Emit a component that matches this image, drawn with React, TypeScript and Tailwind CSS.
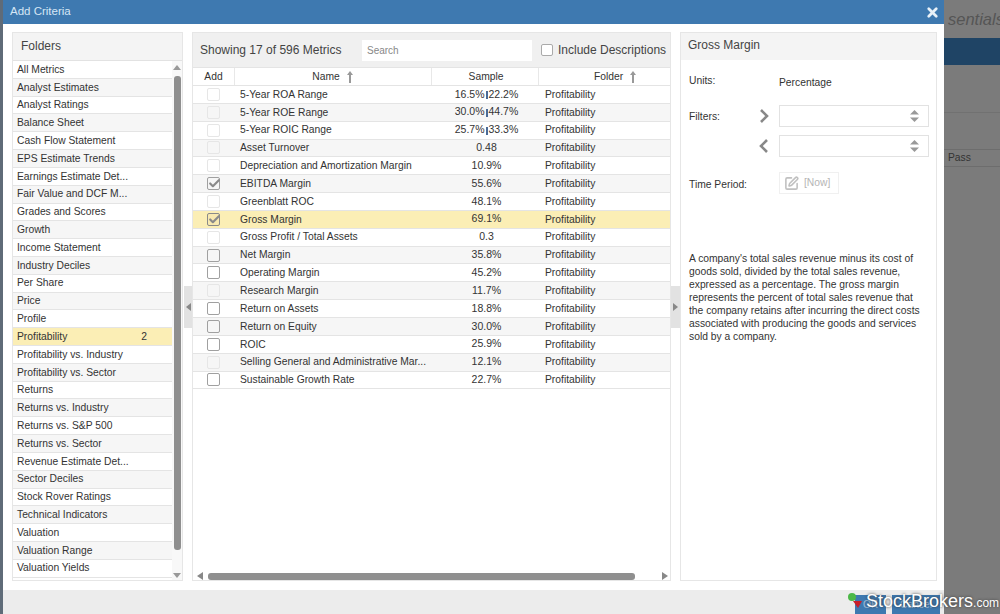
import { X, Check, SquarePen } from 'lucide-react';

const folders = [
    'All Metrics', 'Analyst Estimates', 'Analyst Ratings', 'Balance Sheet', 'Cash Flow Statement',
    'EPS Estimate Trends', 'Earnings Estimate Det...', 'Fair Value and DCF M...', 'Grades and Scores',
    'Growth', 'Income Statement', 'Industry Deciles', 'Per Share', 'Price', 'Profile', 'Profitability',
    'Profitability vs. Industry', 'Profitability vs. Sector', 'Returns', 'Returns vs. Industry',
    'Returns vs. S&P 500', 'Returns vs. Sector', 'Revenue Estimate Det...', 'Sector Deciles',
    'Stock Rover Ratings', 'Technical Indicators', 'Valuation', 'Valuation Range', 'Valuation Yields',
];

const metrics = [
    { name: '5-Year ROA Range', low: '16.5%', high: '22.2%' },
    { name: '5-Year ROE Range', low: '30.0%', high: '44.7%' },
    { name: '5-Year ROIC Range', low: '25.7%', high: '33.3%' },
    { name: 'Asset Turnover', sample: '0.48' },
    { name: 'Depreciation and Amortization Margin', sample: '10.9%' },
    { name: 'EBITDA Margin', sample: '55.6%', checked: true },
    { name: 'Greenblatt ROC', sample: '48.1%' },
    { name: 'Gross Margin', sample: '69.1%', checked: true, selected: true },
    { name: 'Gross Profit / Total Assets', sample: '0.3' },
    { name: 'Net Margin', sample: '35.8%', strong: true },
    { name: 'Operating Margin', sample: '45.2%', strong: true },
    { name: 'Research Margin', sample: '11.7%' },
    { name: 'Return on Assets', sample: '18.8%', strong: true },
    { name: 'Return on Equity', sample: '30.0%', strong: true },
    { name: 'ROIC', sample: '25.9%', strong: true },
    { name: 'Selling General and Administrative Mar...', sample: '12.1%' },
    { name: 'Sustainable Growth Rate', sample: '22.7%', strong: true },
];

function Spinner() {
    return (
        <svg width="9" height="12" viewBox="0 0 9 12" className="fill-[#999]">
            <path d="M4.5 0 L9 4.5 H0 Z" />
            <path d="M4.5 12 L9 7.5 H0 Z" />
        </svg>
    );
}

function SortArrow() {
    return (
        <svg width="8" height="12" viewBox="0 0 8 12" className="shrink-0 fill-[#999]">
            <path d="M4 0 L7 4 H5 V12 H3 V4 H1 Z" />
        </svg>
    );
}

function Chevron({ dir }: { dir: 'left' | 'right' }) {
    return (
        <svg width="10" height="14" viewBox="0 0 10 14" fill="none" className="stroke-[#888]" strokeWidth="2.6">
            <path d={dir === 'right' ? 'M2 1 L8 7 L2 13' : 'M8 1 L2 7 L8 13'} />
        </svg>
    );
}

function Box({ checked, strong, selected }: { checked?: boolean; strong?: boolean; selected?: boolean }) {
    const border = selected ? 'border-[#8a8a8a]' : checked || strong ? 'border-[#a0a0a0]' : 'border-[#e6e6e6]';
    return (
        <div className={`relative w-[13px] h-[13px] rounded-[2px] border ${border} ${selected ? 'bg-[#f8e9b0]' : ''}`}>
            {checked && <Check className="absolute -top-[1px] -left-[0.5px] w-[13px] h-[13px] text-[#8a8a8a]" strokeWidth={4} />}
        </div>
    );
}

export default function App() {
    return (
        <div className="relative w-[1000px] h-[614px] overflow-hidden flex bg-[#7b7b7b] text-[#333] text-[10.3px] font-['Liberation_Sans',Arial,sans-serif]">
            <div className="w-[3px] shrink-0 bg-[#5f6b78]" />

            {/* dialog */}
            <div className="w-[941px] shrink-0 h-full flex flex-col bg-white">
                <div className="h-[24px] shrink-0 bg-[#3e79b0] flex items-center justify-between pl-[7px] pr-[4px] text-[#d5e6f5] text-[11.5px]">
                    <span>Add Criteria</span>
                    <X className="w-[15px] h-[15px] text-[#e8f1f8]" strokeWidth={4.5} />
                </div>

                <div className="flex-1 min-h-0 flex pt-[8px] pl-[9px] pr-[7px] pb-[9px]">
                    {/* folders */}
                    <div className="w-[171px] shrink-0 flex flex-col border border-[#e6e6e6] bg-white">
                        <div className="h-[28px] shrink-0 bg-[#f4f4f4] border-b border-[#e2e2e2] flex items-center pl-[8px] pb-[2px] text-[12px] text-[#444]">Folders</div>
                        <div className="flex-1 flex min-h-0">
                            <div className="flex-1 min-w-0">
                                {folders.map((f, i) => (
                                    <div
                                        key={f}
                                        className={`h-[17.82px] flex items-center justify-between pl-[4px] pr-[25px] border-b border-[#e4e4e4] ${f === 'Profitability' ? 'bg-[#fbeeb5]' : i % 2 === 1 ? 'bg-[#f6f6f6]' : 'bg-white'}`}
                                    >
                                        <span>{f}</span>
                                        {f === 'Profitability' && <span>2</span>}
                                    </div>
                                ))}
                            </div>
                            <div className="w-[10px] shrink-0 flex flex-col items-center bg-[#f8f8f8]">
                                <svg width="8" height="5" viewBox="0 0 8 5" className="mt-[4px] fill-[#999]"><path d="M4 0 L8 5 H0 Z" /></svg>
                                <div className="w-[7px] flex-1 mt-[6px] mb-[23px] bg-[#8f8f8f] rounded-[3px]" />
                                <svg width="8" height="5" viewBox="0 0 8 5" className="mb-[2px] fill-[#999]"><path d="M4 5 L8 0 H0 Z" /></svg>
                            </div>
                        </div>
                    </div>

                    {/* left splitter */}
                    <div className="w-[9px] shrink-0 flex items-center pl-[1px]">
                        <div className="w-[8px] h-[42px] bg-[#e2e2e2] flex items-center justify-center">
                            <svg width="5" height="8" viewBox="0 0 5 8" className="fill-[#888]"><path d="M0 4 L5 0 V8 Z" /></svg>
                        </div>
                    </div>

                    {/* metrics */}
                    <div className="w-[479px] shrink-0 flex flex-col border border-[#e6e6e6] bg-white">
                        <div className="h-[34px] shrink-0 bg-[#f0f0f0] flex items-center pl-[7px] text-[#444]">
                            <span className="text-[12px] w-[162px] shrink-0 whitespace-nowrap">Showing 17 of 596 Metrics</span>
                            <div className="w-[170px] h-[21px] shrink-0 bg-white flex items-center pl-[5px] text-[#888] text-[10px]">Search</div>
                            <div className="w-[12px] h-[12px] ml-[9px] rounded-[2px] border border-[#aaa] bg-white shrink-0" />
                            <span className="ml-[5px] text-[12px] whitespace-nowrap">Include Descriptions</span>
                        </div>

                        <div className="h-[19px] shrink-0 flex items-center border-y border-[#e4e4e4] bg-white">
                            <div className="w-[42px] h-full flex items-center justify-center border-r border-[#e8e8e8] shrink-0">Add</div>
                            <div className="w-[197px] h-full flex items-center justify-center gap-[6px] border-r border-[#e8e8e8] shrink-0">Name <SortArrow /></div>
                            <div className="w-[107px] h-full flex items-center justify-center pl-[2px] border-r border-[#e8e8e8] shrink-0">Sample</div>
                            <div className="flex-1 h-full flex items-center pl-[55px] gap-[6px]">Folder <SortArrow /></div>
                        </div>

                        <div className="flex-1 min-h-0">
                            {metrics.map((m, i) => (
                                <div
                                    key={m.name}
                                    className={`h-[17.85px] flex items-center border-b border-[#e4e4e4] ${m.selected ? 'bg-[#fbeeb5]' : i % 2 === 1 ? 'bg-[#f6f6f6]' : 'bg-white'}`}
                                >
                                    <div className="w-[42px] shrink-0 pl-[14px]">
                                        <Box checked={m.checked} strong={m.strong} selected={m.selected} />
                                    </div>
                                    <div className="w-[197px] shrink-0 pl-[5px] whitespace-nowrap overflow-hidden">{m.name}</div>
                                    <div className="w-[107px] shrink-0 flex items-center justify-center pl-[2px] text-[10.5px]">
                                        {m.low ? (
                                            <>
                                                <span>{m.low}</span>
                                                <span className="w-[2px] h-[8px] mx-[1px] mt-[1px] bg-[#4a6a96]" />
                                                <span>{m.high}</span>
                                            </>
                                        ) : (
                                            m.sample
                                        )}
                                    </div>
                                    <div className="pl-[6px]">Profitability</div>
                                </div>
                            ))}
                        </div>

                        <div className="h-[8px] shrink-0 flex items-center pl-[4px] pr-[2px]">
                            <svg width="6" height="8" viewBox="0 0 6 8" className="fill-[#888] shrink-0"><path d="M0 4 L6 0 V8 Z" /></svg>
                            <div className="w-[427px] h-[7px] ml-[5px] bg-[#8f8f8f] rounded-[3px]" />
                            <svg width="6" height="8" viewBox="0 0 6 8" className="fill-[#888] shrink-0 ml-auto"><path d="M6 4 L0 0 V8 Z" /></svg>
                        </div>
                    </div>

                    {/* right splitter */}
                    <div className="w-[9px] shrink-0 flex items-center">
                        <div className="w-[9px] h-[42px] bg-[#e2e2e2] flex items-center justify-center">
                            <svg width="5" height="8" viewBox="0 0 5 8" className="fill-[#888]"><path d="M5 4 L0 0 V8 Z" /></svg>
                        </div>
                    </div>

                    {/* details */}
                    <div className="flex-1 min-w-0 flex flex-col border border-[#e6e6e6] bg-white">
                        <div className="h-[27px] shrink-0 bg-[#f4f4f4] flex items-center pl-[7px] pb-[3px] text-[12px] text-[#444]">Gross Margin</div>
                        <div className="pl-[8px] pr-[6px] pt-[11px]">
                            <div className="flex h-[24px]">
                                <div className="w-[90px] shrink-0 pt-[2px]">Units:</div>
                                <div className="pt-[4px]">Percentage</div>
                            </div>
                            <div className="flex mt-[10px]">
                                <div className="w-[70px] shrink-0 pt-[4px]">Filters:</div>
                                <div className="w-[20px] shrink-0 flex flex-col items-start">
                                    <div className="h-[22px] flex items-center"><Chevron dir="right" /></div>
                                    <div className="h-[22px] mt-[8px] flex items-center"><Chevron dir="left" /></div>
                                </div>
                                <div className="w-[150px] shrink-0">
                                    <div className="h-[22px] border border-[#e2e2e2] flex items-center justify-end pr-[9px]"><Spinner /></div>
                                    <div className="h-[22px] mt-[8px] border border-[#e2e2e2] flex items-center justify-end pr-[9px]"><Spinner /></div>
                                </div>
                            </div>
                            <div className="flex items-center mt-[15px]">
                                <div className="w-[90px] shrink-0 pt-[3px]">Time Period:</div>
                                <div className="h-[22px] w-[60px] border border-[#f0f0f0] flex items-center pl-[4px] gap-[5px] text-[#b5b5b5]">
                                    <SquarePen className="w-[15px] h-[15px] text-[#c0c0c0]" strokeWidth={2.5} />
                                    <span>[Now]</span>
                                </div>
                            </div>
                            <p className="mt-[58px] leading-[13px] w-[236px]">
                                A company's total sales revenue minus its cost of goods sold, divided by the total sales revenue, expressed as a percentage. The gross margin represents the percent of total sales revenue that the company retains after incurring the direct costs associated with producing the goods and services sold by a company.
                            </p>
                        </div>
                    </div>
                </div>

                <div className="h-[24px] shrink-0 bg-[#ececec] flex justify-end pt-[5px] pr-[4px] gap-[6px]">
                    <div className="w-[31px] h-full bg-[#3e79b0] text-white/50 flex items-center justify-center">OK</div>
                    <div className="w-[48px] h-full bg-[#3e79b0] text-white/50 flex items-center justify-center">Cancel</div>
                </div>
            </div>

            {/* page behind the dialog */}
            <div className="flex-1 min-w-0 flex flex-col">
                <div className="h-[38px] shrink-0 flex items-center pl-[4px] italic text-[16.5px] text-[#555] whitespace-nowrap">sentials</div>
                <div className="h-[27px] shrink-0 bg-[#1f4465]" />
                <div className="h-[48px] shrink-0 border-b border-[#717171]" />
                <div className="mt-[36px] h-[18px] border-y border-[#6d6d6d] flex items-center pl-[4px]">Pass</div>
            </div>

            {/* watermark */}
            <div className="absolute left-[846px] top-[590px] flex items-center text-white [text-shadow:0_0_3px_#333]">
                <svg width="20" height="22" viewBox="0 0 20 22" className="shrink-0">
                    <circle cx="6" cy="7" r="4" fill="#4cb848" />
                    <path d="M7 11 H16 L12 18 Z" fill="#c8202a" />
                </svg>
                <span className="text-[18px] leading-none whitespace-nowrap">StockBrokers<span className="text-[12px]">.com</span></span>
            </div>
        </div>
    );
}
